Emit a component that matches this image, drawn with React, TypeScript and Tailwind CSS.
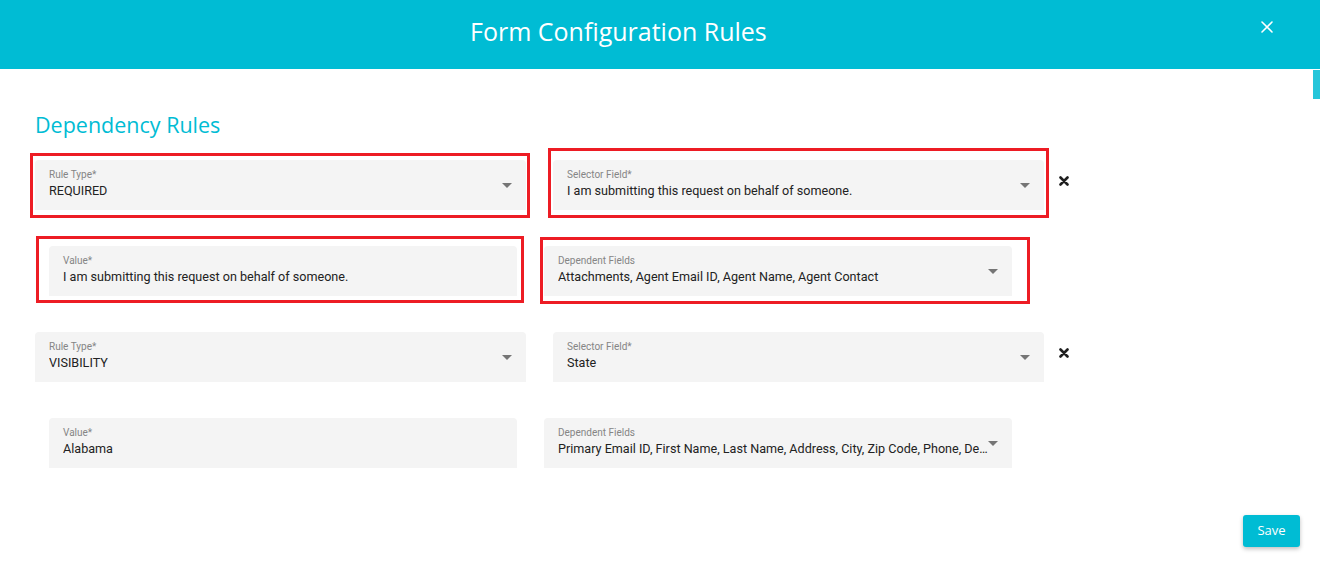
type FieldProps = {
  label: string
  value: string
  select?: boolean
  className: string
  mark?: string
}

const Field = ({ label, value, select, className, mark }: FieldProps) => (
  <div className={`relative h-[50px] shrink-0 rounded-t-[4px] bg-[#f4f4f4] ${className}`}>
    <div className="pl-[14px] pr-[22px] pt-[9px]">
      <p className="text-[10px] leading-[12px] text-[#858585]">{label}</p>
      <p className="mt-[2px] truncate text-[12.6px] leading-[16px] text-[#222222]">{value}</p>
    </div>
    {select && (
      <span className="absolute right-[14px] top-[23px] h-0 w-0 border-x-[5px] border-t-[5px] border-x-transparent border-t-[#757575]" />
    )}
    {mark && (
      <span className={`pointer-events-none absolute border-[3px] border-[#ed1c24] ${mark}`} />
    )}
  </div>
)

const RemoveIcon = () => (
  <button className="ml-[15px] mt-[16px] self-start">
    <svg width="10" height="10" viewBox="0 0 10 10">
      <path d="M1.5 1.5 L8.5 8.5 M8.5 1.5 L1.5 8.5" stroke="#1f1f1f" strokeWidth="2.6" strokeLinecap="round" />
    </svg>
  </button>
)

const rules = [
  {
    type: 'REQUIRED',
    selector: 'I am submitting this request on behalf of someone.',
    value: 'I am submitting this request on behalf of someone.',
    dependents: 'Attachments, Agent Email ID, Agent Name, Agent Contact',
    marks: [
      '-left-[5px] -right-[4px] -top-[7px] -bottom-[8px]',
      '-left-[5px] -right-[5px] -top-[12px] -bottom-[8px]',
      '-left-[13px] -right-[7px] -top-[10px] -bottom-[7px]',
      '-left-[4px] -right-[18px] -top-[9px] -bottom-[8px]',
    ],
  },
  {
    type: 'VISIBILITY',
    selector: 'State',
    value: 'Alabama',
    dependents:
      'Primary Email ID, First Name, Last Name, Address, City, Zip Code, Phone, Department, Agent Name',
    marks: [],
  },
]

export default function App() {
  return (
    <div className="min-h-screen bg-white font-['Roboto',sans-serif]">
      <header className="flex h-[69px] items-start bg-[#00bcd4] pt-[14px]">
        <h1 className="ml-[470px] font-['Open_Sans',sans-serif] text-[25px] leading-[34px] text-white">
          Form Configuration Rules
        </h1>
        <button className="ml-auto mr-[47px] mt-[7px]">
          <svg width="12" height="12" viewBox="0 0 12 12">
            <path d="M1 1 L11 11 M11 1 L1 11" stroke="#ffffff" strokeWidth="1.6" strokeLinecap="round" />
          </svg>
        </button>
      </header>

      <main className="relative pb-[37px] pt-[41px]">
        <span className="absolute right-0 top-[1px] h-[29px] w-[7px] bg-[#26c6da]" />
        <h2 className="ml-[35px] font-['Open_Sans',sans-serif] text-[21.5px] leading-[30px] text-[#00bcd4]">
          Dependency Rules
        </h2>

        <div className="mt-[20px] flex flex-col gap-[36px]">
          {rules.map((rule) => (
            <div key={rule.type} className="flex flex-col gap-[36px]">
              <div className="flex">
                <Field
                  className="ml-[35px] w-[491px]"
                  label="Rule Type*"
                  value={rule.type}
                  select
                  mark={rule.marks[0]}
                />
                <Field
                  className="ml-[27px] w-[491px]"
                  label="Selector Field*"
                  value={rule.selector}
                  select
                  mark={rule.marks[1]}
                />
                <RemoveIcon />
              </div>
              <div className="flex">
                <Field
                  className="ml-[49px] w-[468px]"
                  label="Value*"
                  value={rule.value}
                  mark={rule.marks[2]}
                />
                <Field
                  className="ml-[27px] w-[468px]"
                  label="Dependent Fields"
                  value={rule.dependents}
                  select
                  mark={rule.marks[3]}
                />
              </div>
            </div>
          ))}
        </div>

        <div className="mt-[47px] flex justify-end pr-[20px]">
          <button className="h-[32px] w-[57px] rounded-[3px] bg-[#00bcd4] font-['Open_Sans',sans-serif] text-[13px] text-white shadow-[0_2px_4px_rgba(0,0,0,0.25)]">
            Save
          </button>
        </div>
      </main>
    </div>
  )
}
